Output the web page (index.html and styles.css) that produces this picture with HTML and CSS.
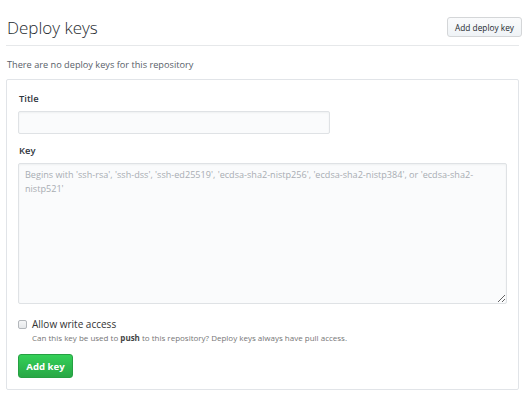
FILE: index.html
```html
<!DOCTYPE html>
<html>
<head>
<meta charset="utf-8">
<link rel="stylesheet" href="styles.css">
</head>
<body>
<div class="page">
  <div class="subhead">
    <h2 class="subhead-title">Deploy keys</h2>
    <button class="btn btn-sm">Add deploy key</button>
  </div>
  <p class="blank">There are no deploy keys for this repository</p>
  <form class="box">
    <div class="group group-title">
      <label class="label">Title</label>
      <input class="input input-title" type="text">
    </div>
    <div class="group">
      <label class="label">Key</label>
      <textarea class="input textarea" placeholder="Begins with 'ssh-rsa', 'ssh-dss', 'ssh-ed25519', 'ecdsa-sha2-nistp256', 'ecdsa-sha2-nistp384', or 'ecdsa-sha2-nistp521'"></textarea>
    </div>
    <div class="check">
      <span class="checkbox"></span>
      <div class="check-text">
        <div class="check-label">Allow write access</div>
        <div class="note">Can this key be used to <strong>push</strong> to this repository? Deploy keys always have pull access.</div>
      </div>
    </div>
    <button class="btn btn-primary" type="button">Add key</button>
  </form>
</div>
</body>
</html>
```

FILE: styles.css
```css
* { box-sizing: border-box; }
html, body { margin: 0; padding: 0; background: #fff; }
body {
  font-family: "Open Sans", "Noto Sans", "Liberation Sans", sans-serif;
  color: #24292e;
}
.page {
  width: 519px;
  padding: 17px 0 0 6px;
}
.subhead {
  display: flex;
  justify-content: space-between;
  align-items: flex-start;
  border-bottom: 1px solid #e6e8ea;
  padding-bottom: 7px;
}
.subhead-title {
  margin: 0;
  padding-left: 1px;
  font-size: 17px;
  font-weight: 300;
  line-height: 21px;
  color: #24292e;
}
.btn {
  font-family: inherit;
  cursor: pointer;
  border-radius: 3px;
}
.btn-sm {
  height: 20px;
  width: 75px;
  padding: 0;
  margin-right: -3px;
  font-size: 8.3px;
  color: #24292e;
  background: linear-gradient(#fafbfc, #eff3f6);
  border: 1px solid #d4d6d8;
}
.blank {
  margin: 13px 0 0 1px;
  font-size: 9.2px;
  line-height: 12px;
  color: #586069;
}
.box {
  margin: 8px 0 0 0;
  border: 1px solid #e1e4e8;
  border-radius: 2px;
  padding: 10px 11px 10px 11px;
  height: 311px;
}
.group { margin-bottom: 6px; }
.group-title { margin-bottom: 11px; }
.label {
  display: block;
  font-size: 9.4px;
  font-weight: 600;
  color: #2f363d;
  line-height: 12px;
  margin: 3px 0 6px 1px;
}
.input {
  display: block;
  background: #fafbfc;
  border: 1px solid #dfe2e5;
  border-radius: 2px;
  box-shadow: inset 0 1px 2px rgba(27,31,35,0.05);
  font-family: inherit;
}
.input-title {
  width: 312px;
  height: 23px;
}
.textarea {
  width: 489px;
  height: 141px;
  resize: vertical;
  padding: 4px 6px;
  font-size: 9.1px;
  line-height: 14px;
}
.textarea::placeholder { color: #a8adb3; }
.check {
  display: flex;
  gap: 5px;
  margin-top: 14px;
}
.checkbox {
  width: 9px;
  height: 9px;
  margin-top: 2px;
  border: 1px solid #b3b7bb;
  border-radius: 2px;
  background: linear-gradient(#f5f6f7, #e6e8ea);
}
.check-label {
  font-size: 10px;
  font-weight: 400;
  color: #333;
  line-height: 13px;
}
.note {
  font-size: 8px;
  color: #767676;
  line-height: 11px;
  margin-top: 1px;
}
.note strong { color: #444; font-weight: 700; }
.btn-primary {
  display: block;
  margin-top: 11px;
  width: 55px;
  height: 24px;
  padding: 0;
  font-size: 9.6px;
  font-weight: 700;
  color: #fff;
  background: linear-gradient(#34d058, #28a745);
  border: 1px solid #26a042;
}
```
